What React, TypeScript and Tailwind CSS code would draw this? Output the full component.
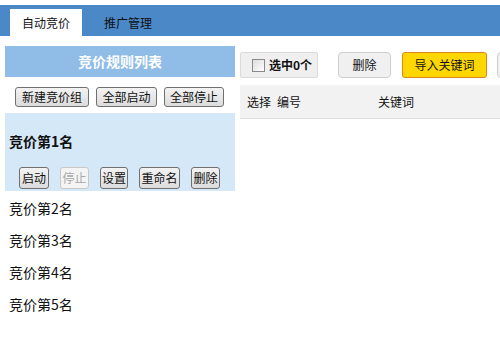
import React from "react";

const font = { fontFamily: '"Noto Sans CJK SC", "Noto Sans", sans-serif' };

function ClassicBtn({ children, w, h = 20, disabled = false }: { children: React.ReactNode; w: number; h?: number; disabled?: boolean }) {
  return (
    <div
      className={
        "flex flex-none items-center justify-center rounded-[3px] border text-[12px] " +
        (disabled
          ? "border-[#c8c8c8] bg-[#f4f4f4] text-[#a8a8a8]"
          : "border-[#707070] bg-gradient-to-b from-[#f3f3f3] to-[#dcdcdc] text-[#111]")
      }
      style={{ width: w, height: h }}
    >
      {children}
    </div>
  );
}

export default function App() {
  return (
    <div className="w-[500px] h-[338px] overflow-hidden bg-white text-[#111]" style={font}>
      <div className="pt-[5px]">
        <div className="flex h-[31px] items-end bg-[#4a88c8] pl-[10px]">
          <div className="h-[27px] w-[72px] bg-white text-center text-[12px] leading-[27px]">自动竞价</div>
          <div className="h-[27px] pl-[22px] text-[12px] leading-[27px]">推广管理</div>
        </div>
      </div>
      <div className="mt-[10px] flex">
        <div className="ml-[5px] w-[230px] flex-none">
          <div className="h-[31px] bg-[#8fbde8] text-center text-[14px] font-bold leading-[31px] text-white">竞价规则列表</div>
          <div className="mt-[10px] flex gap-[7px] pl-[10px]">
            <ClassicBtn w={74}>新建竞价组</ClassicBtn>
            <ClassicBtn w={61}>全部启动</ClassicBtn>
            <ClassicBtn w={60}>全部停止</ClassicBtn>
          </div>
          <div className="mt-[6px] h-[78px] bg-[#d5e8f8]">
            <div className="pl-[4px] pt-[18px] text-[14px] font-bold leading-[20px]">竞价第1名</div>
            <div className="mt-[16px] flex gap-[11px] pl-[14px]">
              <ClassicBtn w={30} h={22}>启动</ClassicBtn>
              <ClassicBtn w={29} h={22} disabled>停止</ClassicBtn>
              <ClassicBtn w={28} h={22}>设置</ClassicBtn>
              <ClassicBtn w={41} h={22}>重命名</ClassicBtn>
              <ClassicBtn w={29} h={22}>删除</ClassicBtn>
            </div>
          </div>
          <div className="mt-px">
            {["竞价第2名", "竞价第3名", "竞价第4名", "竞价第5名"].map((t) => (
              <div key={t} className="h-[32px] pl-[4px] text-[14px] leading-[32px]">{t}</div>
            ))}
          </div>
        </div>
        <div className="ml-[5px] min-w-0 flex-1 overflow-hidden">
          <div className="mt-[6px] flex h-[26px]">
            <div className="flex h-[26px] w-[78px] flex-none items-center rounded-[2px] border border-[#dadada] bg-[#efefef] pl-[11px]">
              <div className="h-[13px] w-[13px] flex-none border border-[#8a8a8a] bg-gradient-to-br from-[#dcdcdc] to-[#ffffff]" />
              <span className="ml-[4px] text-[12px] font-bold">选中0个</span>
            </div>
            <div className="ml-[20px] flex h-[26px] w-[53px] flex-none items-center justify-center rounded-[4px] border border-[#cfcfcf] bg-[#f0f0f0] text-[12px]">删除</div>
            <div className="ml-[11px] flex h-[26px] w-[85px] flex-none items-center justify-center rounded-[3px] border border-[#e0841c] bg-[#ffd700] text-[12px]">导入关键词</div>
            <div className="ml-[10px] h-[26px] w-[60px] flex-none rounded-[4px] border border-[#cfcfcf] bg-[#f0f0f0]" />
          </div>
          <div className="mt-[7px] flex h-[34px] items-center border-b border-[#dedede] bg-[#f2f2f2] text-[12px]">
            <span className="ml-[7px]">选择</span>
            <span className="ml-[6px]">编号</span>
            <span className="ml-[77px]">关键词</span>
          </div>
        </div>
      </div>
    </div>
  );
}
